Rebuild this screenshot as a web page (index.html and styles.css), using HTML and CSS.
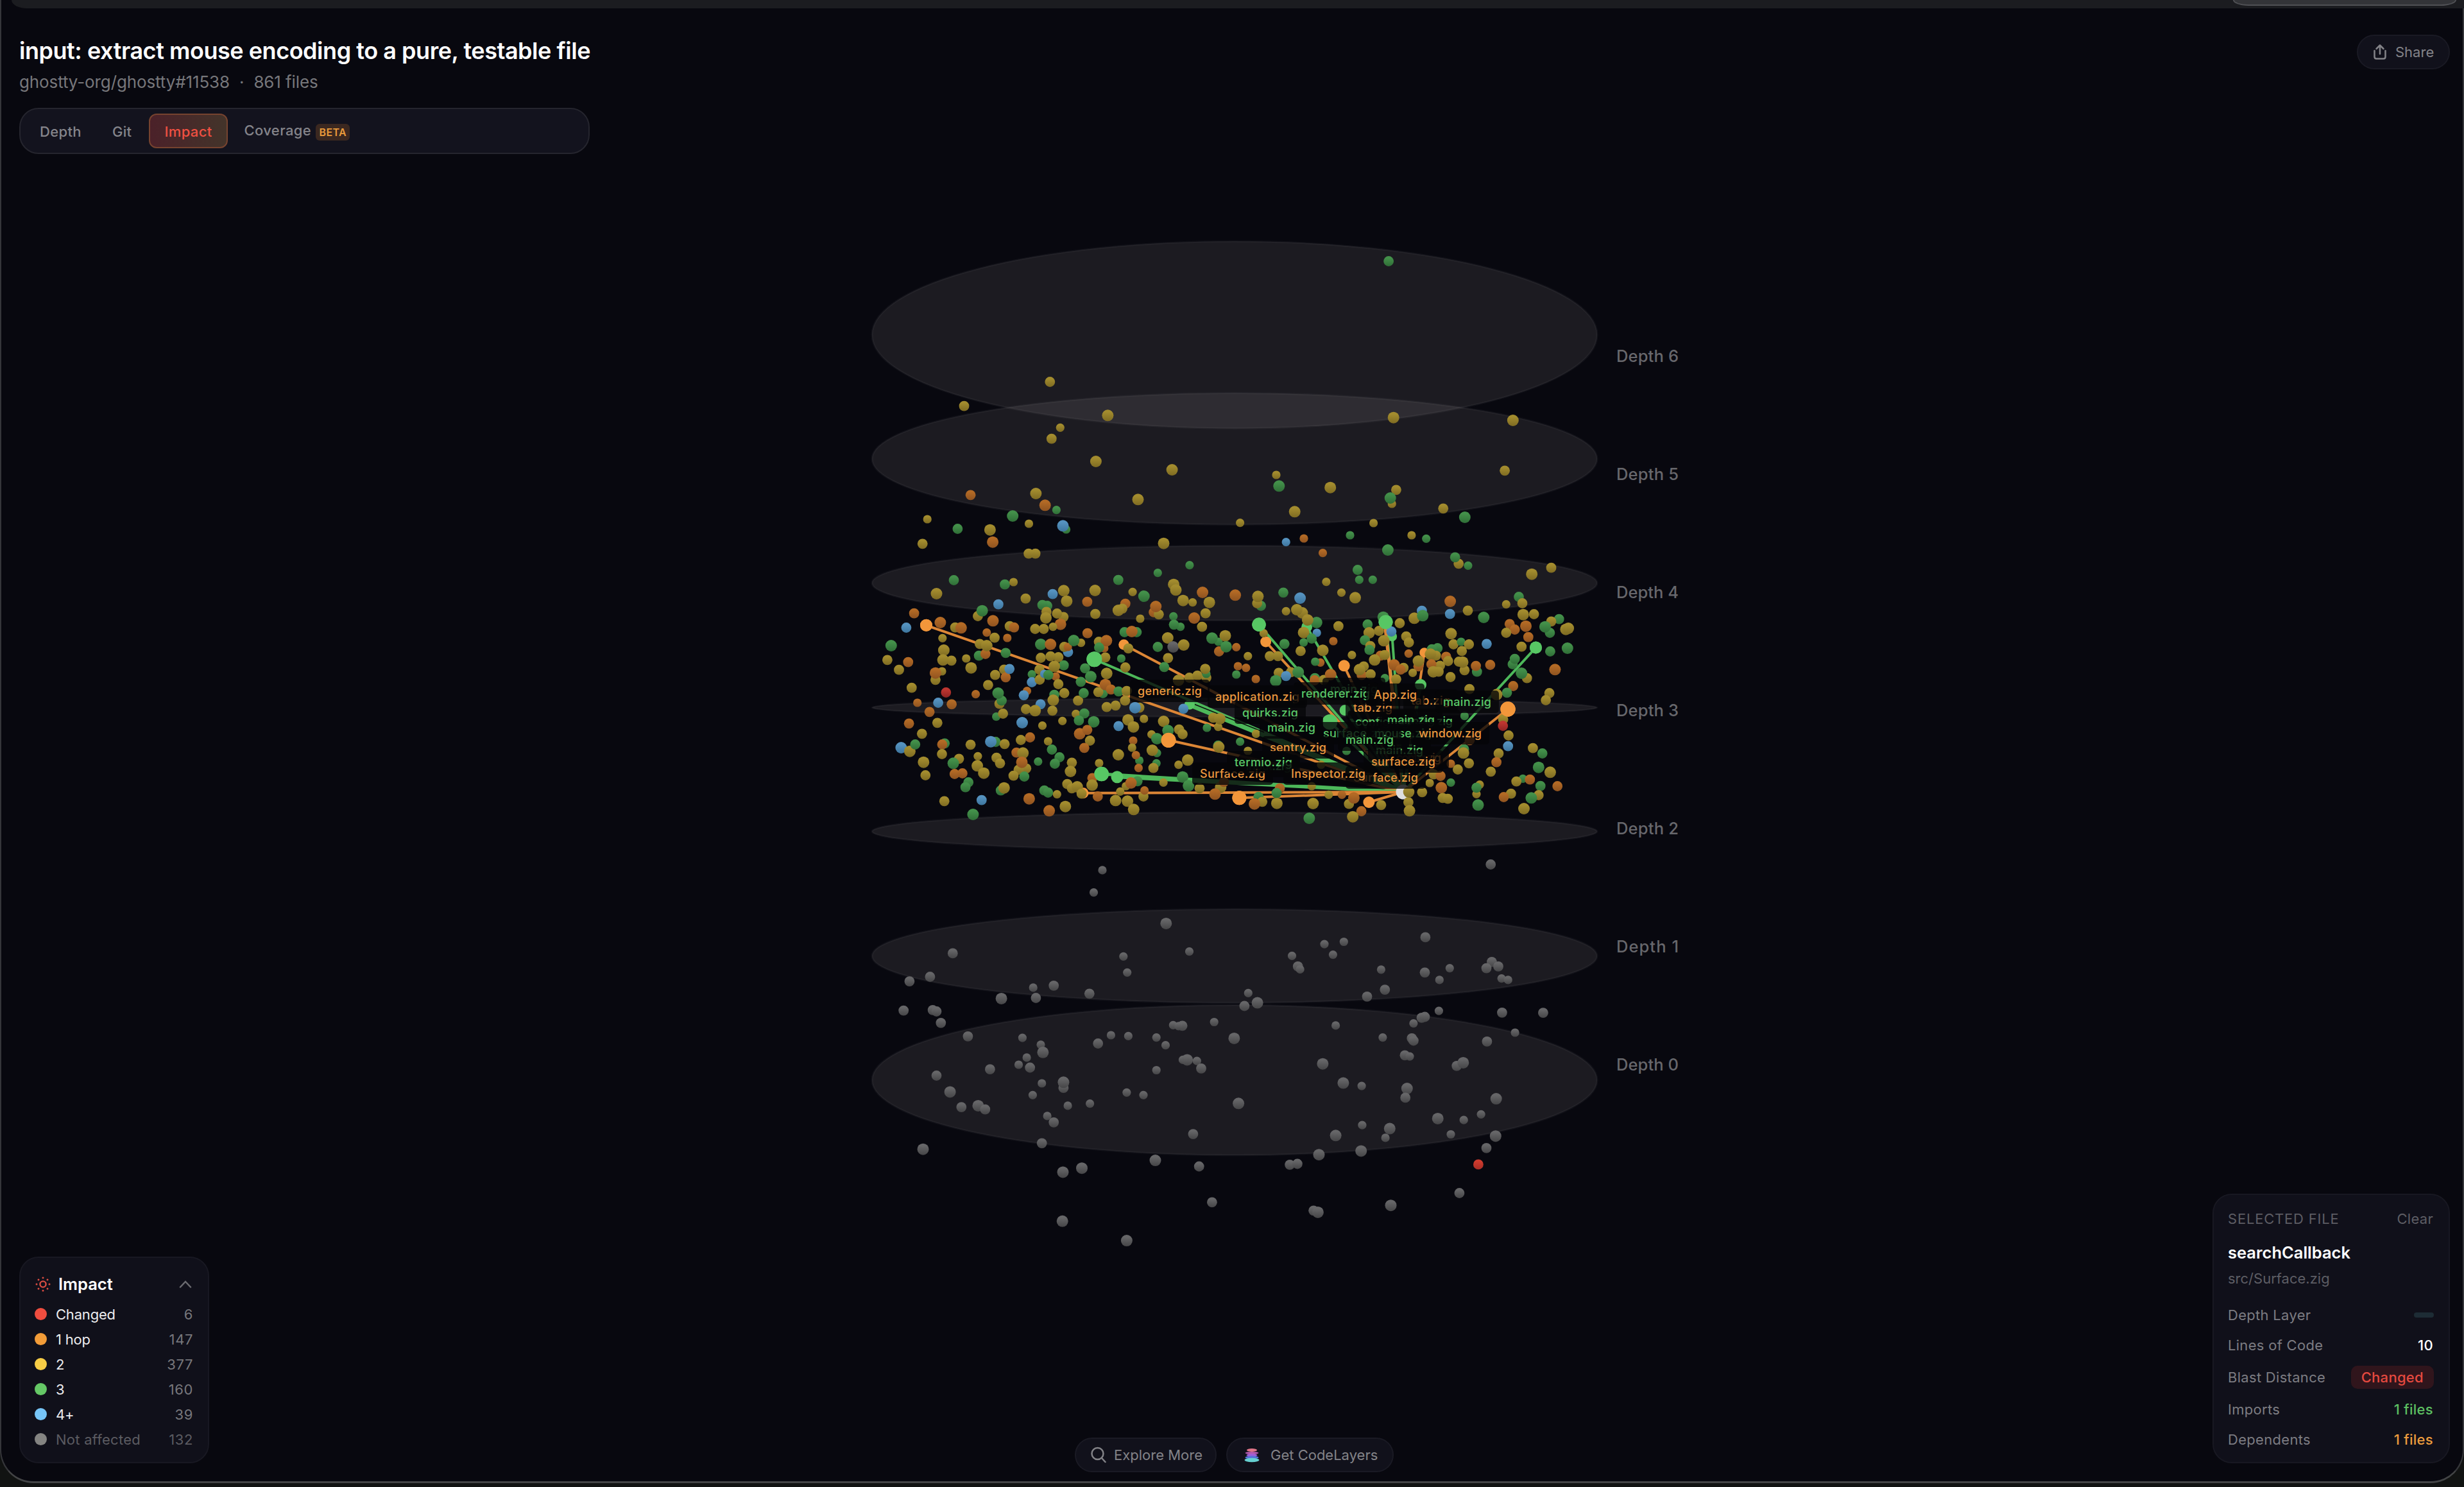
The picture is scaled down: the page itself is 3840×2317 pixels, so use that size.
FILE: index.html
```html
<!DOCTYPE html>
<html lang="en">
<head>
    <meta charset="utf-8">
    <title>CodeLayers</title>
    <link rel="stylesheet" href="styles.css">
</head>
<body>
    <div class="desktop">
        <div class="topbar"><div class="topbar-pill"></div></div>
        <div class="window">
            <svg class="scene" id="scene" width="3840" height="2317" viewBox="0 0 3840 2317"></svg>
            <header class="header">
                <div class="heading">
                    <h1>input: extract mouse encoding to a pure, testable file</h1>
                    <p class="repo">ghostty-org/ghostty#11538<span class="sep">·</span>861 files</p>
                    <nav class="tabs">
                        <button class="tab">Depth</button>
                        <button class="tab">Git</button>
                        <button class="tab active">Impact</button>
                        <button class="tab">Coverage <span class="beta">BETA</span></button>
                    </nav>
                </div>
                <button class="pill share">
                    <svg width="22" height="26" viewBox="0 0 22 26"><path d="M2.500 11v9.500q0 3 3 3h11q3 0 3-3V11M11 16V3M5.500 8 11 2.500 16.500 8"/></svg>
                    <span>Share</span>
                </button>
            </header>
            <footer class="footer">
                <section class="panel legend">
                    <div class="legend-head">
                        <svg class="burst" width="24" height="24" viewBox="0 0 24 24"><circle class="core" cx="12" cy="12" r="4.600"/><circle cx="12" cy="2" r="1.500"/><circle cx="12" cy="22" r="1.500"/><circle cx="2" cy="12" r="1.500"/><circle cx="22" cy="12" r="1.500"/><circle cx="5" cy="5" r="1.500"/><circle cx="19" cy="5" r="1.500"/><circle cx="5" cy="19" r="1.500"/><circle cx="19" cy="19" r="1.500"/></svg>
                        <h2>Impact</h2>
                        <svg class="chevron" width="20" height="12" viewBox="0 0 20 12"><path d="M2 10.500 10 2l8 8.500"/></svg>
                    </div>
                    <ul>
                        <li><i class="dot red"></i><span>Changed</span><b>6</b></li>
                        <li><i class="dot orange"></i><span>1 hop</span><b>147</b></li>
                        <li><i class="dot yellow"></i><span>2</span><b>377</b></li>
                        <li><i class="dot green"></i><span>3</span><b>160</b></li>
                        <li><i class="dot blue"></i><span>4+</span><b>39</b></li>
                        <li class="off"><i class="dot gray"></i><span>Not affected</span><b>132</b></li>
                    </ul>
                </section>
                <div class="actions">
                    <button class="pill explore">
                        <svg width="24" height="26" viewBox="0 0 24 26"><circle cx="10.500" cy="11" r="9"/><path d="m17 18 5.500 6"/></svg>
                        <span>Explore More</span>
                    </button>
                    <button class="pill get">
                        <svg class="logo" width="24" height="24" viewBox="0 0 24 24">
                            <ellipse cx="12" cy="4.500" rx="8" ry="2.500" fill="#e07688"/>
                            <ellipse cx="12" cy="9" rx="10.500" ry="2" fill="#b45bb0"/>
                            <ellipse cx="12" cy="12.500" rx="8.500" ry="2.200" fill="#a05fd8"/>
                            <ellipse cx="12" cy="16" rx="10.500" ry="2.400" fill="#5673d8"/>
                            <ellipse cx="12" cy="20" rx="11.500" ry="3.300" fill="#66d0d0"/>
                        </svg>
                        <span>Get CodeLayers</span>
                    </button>
                </div>
                <section class="panel selected">
                    <div class="row head"><span class="caption">SELECTED FILE</span><span class="clear">Clear</span></div>
                    <h2>searchCallback</h2>
                    <p class="path">src/Surface.zig</p>
                    <div class="row"><span>Depth Layer</span><i class="dash"></i></div>
                    <div class="row loc"><span>Lines of Code</span><b>10</b></div>
                    <div class="row blast"><span>Blast Distance</span><b class="changed">Changed</b></div>
                    <div class="row"><span>Imports</span><b class="imports">1 files</b></div>
                    <div class="row"><span>Dependents</span><b class="dependents">1 files</b></div>
                </section>
            </footer>
        </div>
    </div>
    <script src="scene.js"></script>
</body>
</html>
```

FILE: styles.css
```css
* {
    box-sizing: border-box;
}
body {
    margin: 0;
    width: 3840px;
    height: 2317px;
    overflow: hidden;
    background: #060609;
    color: #fff;
    font-family: Inter, "Liberation Sans", sans-serif;
    font-size: 22px;
}
h1, h2, p, ul {
    margin: 0;
    padding: 0;
}
b, i {
    font-weight: 400;
    font-style: normal;
}
button {
    font: inherit;
    color: inherit;
    border: 0;
    background: none;
    padding: 0;
}
.desktop {
    height: 2317px;
    position: relative;
    background: linear-gradient(#08080f 0, #08080f 2200px, #111312 2260px);
}
.window {
    position: relative;
    display: flex;
    flex-direction: column;
    justify-content: space-between;
    height: 2311px;
    padding: 54px 20px 28px 28px;
    border: 2px solid #35363a;
    border-top: 0;
    border-bottom: 3px solid #434446;
    border-radius: 0 0 52px 52px;
    background: #08080f;
}
.topbar {
    position: absolute;
    z-index: 2;
    top: 0;
    left: 18px;
    right: 0;
    height: 13px;
    background: #1b1c20;
    border-bottom-left-radius: 24px 13px;
}
.topbar-pill {
    position: absolute;
    right: 12px;
    top: 0;
    width: 348px;
    height: 9px;
    background: #333438;
    border: 2px solid #505155;
    border-top: 0;
    border-radius: 0 0 24px 24px / 0 0 9px 9px;
}
.scene {
    position: absolute;
    left: -2px;
    top: 0;
}
.header, .footer {
    position: relative;
    display: flex;
    justify-content: space-between;
}
.heading {
    width: 889px;
}
h1 {
    font-size: 36px;
    line-height: 44px;
    font-weight: 600;
    letter-spacing: -0.46px;
    white-space: nowrap;
    padding-top: 3px;
}
.repo {
    margin-top: 10px;
    color: #77777b;
    font-size: 26px;
    line-height: 34px;
    letter-spacing: -0.12px;
}
.sep {
    margin: 0 15px;
}
.tabs {
    display: flex;
    align-items: center;
    height: 72px;
    margin-top: 23px;
    padding-left: 6px;
    border: 2px solid #25252e;
    border-radius: 30px;
    background: #13131e;
}
.tab {
    height: 54px;
    padding: 1px 22px 0;
    border: 2px solid transparent;
    border-radius: 12px;
    color: #85858b;
    font-weight: 450;
    letter-spacing: 0.35px;
}
.tab.active {
    margin: 0 2px 0 3px;
    color: #ef5042;
    border-color: #76432f;
    background: linear-gradient(90deg, #4b2129, #43342a);
}
.beta {
    display: inline-block;
    margin-left: 1px;
    width: 53px;
    height: 26px;
    border-radius: 6px;
    background: #3b2820;
    color: #e99a3b;
    font-size: 16px;
    line-height: 26px;
    font-weight: 600;
    text-align: center;
    vertical-align: -1px;
}
.pill {
    display: flex;
    align-items: center;
    height: 54px;
    border: 2px solid #1a1a24;
    border-radius: 27px;
    background: #11111b;
    color: #838388;
}
.pill svg {
    fill: none;
    stroke: #838388;
    stroke-width: 2.500;
    stroke-linecap: round;
    stroke-linejoin: round;
}
.share {
    width: 145px;
    padding-left: 23px;
    gap: 13px;
}
.pill .logo {
    stroke: none;
    margin-left: 2px;
}
.footer {
    align-items: flex-end;
}
.panel {
    border: 2px solid #181822;
    border-radius: 30px;
    background: #10101a;
}
.legend {
    width: 296px;
    height: 322px;
    padding: 21px 23px 0 22px;
}
.legend-head {
    display: flex;
    align-items: center;
    height: 40px;
    margin-bottom: 7px;
}
.burst {
    margin-left: 1px;
    fill: #d94c42;
}
.burst .core {
    fill: none;
    stroke: #d94c42;
    stroke-width: 2.400;
}
h2 {
    font-size: 25.5px;
    line-height: 32px;
    font-weight: 600;
}
.legend h2 {
    flex: 1;
    margin-left: 12px;
}
.chevron {
    fill: none;
    stroke: #6b6b70;
    stroke-width: 2.500;
    stroke-linecap: round;
    margin-right: 2px;
}
.legend li {
    display: flex;
    align-items: center;
    height: 39px;
    color: #ececee;
}
.legend li span {
    flex: 1;
    margin-left: 14px;
    letter-spacing: -0.2px;
}
.legend li b {
    color: #77777c;
    letter-spacing: 0.6px;
}
.legend li.off span, .legend li.off b {
    color: #5b5b61;
}
.legend li.off span {
    letter-spacing: 0.25px;
}
.dot {
    width: 19px;
    height: 19px;
    border-radius: 50%;
}
.red { background: #ef4d3f; }
.orange { background: #f29c38; }
.yellow { background: #f7cd46; }
.green { background: #65c866; }
.blue { background: #77c5f7; }
.gray { background: #848482; }
.actions {
    position: absolute;
    left: 1645px;
    bottom: -14px;
    display: flex;
    gap: 15px;
}
.explore {
    width: 221px;
    padding-left: 23px;
    gap: 12px;
}
.get {
    width: 261px;
    padding-left: 24px;
    gap: 17px;
}
.selected {
    width: 370px;
    height: 420px;
    padding: 17px 24px 0 22px;
}
.row {
    display: flex;
    justify-content: space-between;
    align-items: center;
    height: 47px;
    color: #7c7c82;
    letter-spacing: 0.3px;
}
.row.head {
    height: 40px;
    color: #5d5d64;
}
.caption {
    letter-spacing: 0.8px;
}
.selected h2 {
    margin-top: 17px;
}
.path {
    margin: 9px 0 18px;
    line-height: 30px;
    color: #5d5d64;
}
.row b {
    color: #fff;
    font-weight: 500;
}
.row.blast {
    height: 53px;
}
.dash {
    width: 31px;
    height: 8px;
    border-radius: 4px;
    background: #1d2c35;
    margin-right: -1px;
}
.row .changed {
    height: 36px;
    padding: 0 16px;
    margin-right: -1px;
    border-radius: 10px;
    background: #30151c;
    color: #e5493f;
    line-height: 36px;
}
.row .imports { color: #5cbf61; }
.row .dependents { color: #eb9b3d; }
```

FILE: scene.js
```js
var scene = document.getElementById("scene");
var NS = "http://www.w3.org/2000/svg";

function add(name, attrs, text) {
    var el = document.createElementNS(NS, name);
    for (var key in attrs) el.setAttribute(key, attrs[key]);
    if (text) el.textContent = text;
    scene.appendChild(el);
    return el;
}

// top / bottom shade of every node colour
var shades = {
    y: ["#a38c2e", "#7e6b22"],
    o: ["#b36a25", "#8f5320"],
    g: ["#43904a", "#2f6e37"],
    b: ["#5592bf", "#3d759e"],
    x: ["#666668", "#454547"],
    r: ["#bf3530", "#8f2423"],
    R: ["#cf3b2e", "#a82d25"]
};
var defs = add("defs", {});
for (var id in shades) {
    defs.innerHTML += '<linearGradient id="n-' + id + '" x1="0" y1="0" x2="0" y2="1">' +
        '<stop offset="0.2" stop-color="' + shades[id][0] + '"/><stop offset="1" stop-color="' + shades[id][1] + '"/></linearGradient>';
}

// depth layers: label, centre y, vertical radius, label y
var layers = [
    ["Depth 0", 1683, 117, 1658.6],
    ["Depth 1", 1489.6, 73, 1475],
    ["Depth 2", 1295.5, 30, 1290.8],
    ["Depth 3", 1102.5, 14.5, 1106.7],
    ["Depth 4", 908.5, 58.3, 922.7],
    ["Depth 5", 715, 102.5, 738.7],
    ["Depth 6", 521.7, 145.7, 555]
];
layers.forEach(function (l) {
    add("ellipse", {cx: 1924, cy: l[1], rx: 565, ry: l[2], fill: "#fff6ee", "fill-opacity": 0.083, stroke: "#fff", "stroke-opacity": 0.045, "stroke-width": 3});
});

// nodes per sector: x,y + colour + optional size (s / l)
var sectors = [
    {x: 1340, y: 350, kx: 1.1879, ky: 3, nodes:
        "979,171g 352,735y 193,848y 459,892yl 371,949ys 355,1001y 988,902yl 1209,915yl 437,1107yl 578,1146yl 771,1170ys 776,1222gl 871,1229yl 1194,1150y " +
        "993,1240y 985,1305ys 982,1278gl 205,1264o 326,1257yl 343,1312ol 364,1334gs 515,1285yl 805,1342yl 704,1394ys 1080,1327y 1120,1368gl 951,1395ys " +
        "283,1362gl 125,1377ys 181,1422g 241,1427yl 313,1398ys 382,1425gs 376,1408bl"},
    {x: 1340, y: 830, kx: 2.3758, ky: 3, nodes:
        "232,52y 492,44ol 1125,50yl 625,98y 650,98y 1221,152gs 1103,188gs 348,222g 537,242g 569,231ys 957,221g 284,285yl 614,308y 714,287b 513,335b 755,271yl 766,320yl 871,270yl 842,323o " +
        "1010,277ys 1052,297gl 1162,242yl 1170,268yl 1269,279ol 1232,326ys 1197,317yl 1294,326yl 1390,292ol 1485,342g 1471,330y 1474,298yl 694,342g 676,338g 691,370y 754,394y 730,378y 689,398yl " +
        "743,428ol 649,450y 715,440ys 681,450y 872,380y 983,332o 972,355y 957,363yl 1088,372o 1107,382y 1096,345ol 1038,402ys 1280,377y 1238,399ol 1161,391gs 1187,440gs 1163,430g 1267,440y " +
        "201,377o 298,420ol 172,444b 353,443y 375,445ol 437,390y 453,365gl 493,412ol 555,437y 571,443o 470,467os 499,491y 546,492os 306,493ys 444,520y 441,575g 465,567o 470,528yl 540,562g " +
        "116,528gl 311,549yl 339,598y 308,595yl 394,588ys 412,632yl 102,595y 179,605o 145,641y 304,648ys 280,688y 280,656ol 192,725y 319,747r 429,755os 213,795os 290,795b 340,802o 258,838o 182,892o " +
        "287,889y 230,940y 475,712y 501,665y 534,640y 540,676o 554,637b 637,662gs 665,640y 637,699b 666,687y 683,660bs 725,672os 698,665g 735,708y 757,750y 755,620g 735,582y 706,578y 720,625yl 670,585y " +
        "771,558b 757,534y 770,534os 819,515ys 792,504gl 843,470o 670,522gl 706,522ol 885,510y 905,540os 913,505ol 886,537g 909,583y 968,588gs 983,630y 834,634g 818,697g 855,673gl 914,658yl " +
        "980,465g 1025,465g 1007,462ol 994,541y 1140,492yl 1103,534g 1160,534xl 1199,525yl 1141,586y 1127,628g 1279,637y 1328,510gs 1304,493gl 1330,555o 1353,482yl 1356,533gl 1394,535os 1437,577ys " +
        "1400,624os 1430,632os 1394,663gs 1466,684os 1518,577y 1548,577y 1495,470ys 1551,655y 1540,692gl 1180,690yl 1220,678y 1250,668y 1283,678y 1283,660gs 1279,637y " +
        "517,800y 525,785g 512,750gl 505,860gs 530,846y 619,740os 607,760b 720,758g 716,783yl 713,832y 615,825y 669,802b 649,832yl 601,888bl 676,902ys 750,880ys 808,785y 829,750g 900,750g 883,745y " +
        "909,710ol 930,733o 958,742g 988,740y 982,785y 947,808y 914,815y 800,847ys 831,845g 811,878g 866,884gl 814,940ol 842,922o 852,972y 831,1006o 697,975ys 711,1014g 739,1050g 722,1080g 630,957o 596,969y " +
        "1035,818y 1019,818bl 993,875yl 1013,908yl 1052,870ys 1125,882yl 958,904b 1141,925gl 1182,920y 1195,942y 1080,943ys 1100,963gl 1012,972os 1008,1005ys 1100,1030gs 1083,1017yl 1035,1065gs 1022,1040os " +
        "1032,1100os 1098,1078gs 1087,1100y 957,1038yl 1285,912gs 1327,908ys 1308,865y 1333,870yl 1198,823b 1467,940ys 1408,977gs 1327,995g 1329,1002yl 1437,1020ys 1214,1063yl 1180,1085ys 1124,1168ys 886,1077ys " +
        "153,1005bl 185,1022yl 205,990g 314,985g 305,990o 304,1035y 410,991y 503,978g 485,977bl 536,988y 437,1045ys 367,1057y 346,1078gl 236,1073yl 243,1134y 435,1090yl 459,1124yl 506,1052y 519,1078y " +
        "580,1028o 604,1030yl 616,1102y 588,1108y 600,1073ol 609,1140g 569,1136y 660,1070gs 785,1075y 780,1116yl 351,1128o 380,1125o 402,1167g 391,1190g 313,1255y 451,1250b 419,1317gl 522,1205g 534,1193yl " +
        "627,1244ol 683,1205g 697,1215g 730,1223ys 701,1300ol 761,1280yl 768,1175y 785,1195y 805,1188yl 821,1220y 861,1147o 860,1180yl 881,1233o 985,1185ys 1028,1162g 1004,1170ol 964,1210ys 1050,1233y " +
        "1054,1205os 947,1252yl 991,1255yl 1014,1294yl 1195,1142gl 1217,1183gl 1258,1195y 1336,1190yl 1348,1165o 1315,1222ol 1476,1235g 1490,1258y 1461,1268ol 1544,1265yl 1555,1195o 1543,1217g"},
    {x: 2000, y: 830, kx: 2.3758, ky: 3, nodes:
        "10,44bs 76,27os 247,12gs 475,12ys 529,28gs 387,81gl 146,95os 275,174g 281,220gs 331,220gs 159,230ys 215,280ys 266,304yl 649,145y 636,115g 684,154gs 992,164y 920,194yl 0,280g 62,306bl " +
        "10,367ys 70,375yl 50,360yl 123,420gl 90,408yl 204,437y 124,468bs 75,467yl 64,553y 146,550yl 105,495g 75,513gs 4,520g 137,607os 118,603gs 185,507os 254,572ys 312,429g 318,468yl 354,459y " +
        "302,503g 322,530y 319,548g 360,575o 338,595yl 375,572y 372,505yl 370,395gl 431,423y 455,485y 465,513y 485,400yl 513,365b 516,388gl 464,565os 618,321ol 617,380b 683,364y 742,396gl " +
        "621,472yl 630,522y 658,510gs 687,522y 661,553y 753,520b 825,335ys 872,300g 885,330y 888,383yl 928,381y 838,427o 857,453o 825,468y 898,437ol 907,488o 1021,404g 992,415y 987,468g 969,440gl " +
        "1046,452yl 1055,447yl 882,533y 988,555g 1052,540gl 849,615g 857,590g 902,680y 882,657gl 1006,640ol 766,618o 717,650g 713,623o 689,731y 851,717o 828,748g 790,757yl 985,750y 972,783y " +
        "671,643y 650,603y 664,605yl 603,580o 610,600y 571,540g 550,545g 565,575y 545,568yl 580,622y 548,615o 575,650y 555,650yl 500,625o 500,600yl 619,675y 410,618ol 445,632y 434,640o 479,655ys " +
        "290,665o 298,625y 282,640yl 323,662y 117,680g 116,690o 150,688y 175,663ol 28,652y 55,652gl 10,670b 376,680gs 418,685y 400,462b " +
        "814,873y 813,903r 834,948y 832,998b 924,1007y 959,1032g 797,1032y 789,1073o 768,1117y 988,1120yl 945,1097gl 669,1012g 667,1030yl 687,1078y 620,1080os 646,1107y 557,1130y 582,1137o 542,1170ys " +
        "620,1168gs 727,1178ys 715,1222ys 715,1192g 721,1273gl 887,1150gs 863,1163y 913,1154o 952,1184g 1015,1185o 945,1227y 918,1240gl 843,1220y 816,1236o 891,1290yl 514,1213y 585,1192ol 590,1240y " +
        "609,1244y 463,1260y 467,1300yl 217,1225os 168,1225ys 105,1185ys 110,1266yl 243,1268y 261,1240ol 362,1273y 289,1302o 257,1328yl 96,1335gl 234,1020gs 671,857gs 140,1085ys 690,970o"},
    {x: 1340, y: 1280, kx: 1.1879, ky: 2.24, nodes:
        "449,170xs 433,248xs 1168,150x 567,356xl 172,460x 488,471xs 495,527xs 610,454xs 130,542x 92,558x 860,428xs 896,420xs 876,465xs 800,469xs 811,506x 815,516xs 1047,404x 965,517xs 1046,527x 1092,512xs " +
        "1073,553xs 1170,490x 1182,506x 1160,512x 1188,548xs 1200,553xs 972,587x 939,611x 359,573x 321,580xs 326,616x 262,618xl 425,601x 719,599xs 736,633xl 712,644x 81,660x 135,658x 142,663x 150,703x " +
        "200,750x 301,755xs 335,779xs 339,806xl 309,824xs 294,849xs 315,859x 241,865x 142,887x 167,944xl 188,997x 219,992xl 232,1005x 337,914xs 377,930x 377,910xl 320,955xs 385,992xs 426,985xs 347,1028xs " +
        "359,1050x 337,1123x 117,1144xl 465,746xs 497,749xs 441,775x 549,754xs 566,781xs 580,711xs 597,713x 590,714xs 656,700xs 693,757xl 598,832xs 606,832xl 624,836xs 632,862x 549,868xs 494,946xs 525,955xs " +
        "701,984xl 617,1091x 881,712xs 968,754xs 1072,661xs 1040,685x 1046,682x 1025,705xs 1022,757x 1025,765x 1189,667x 1265,668x 1213,737xs 1161,768x 1009,816x 1018,820xs 857,846xl 895,913xl 929,923xs " +
        "1105,853x 1117,842xl 1013,932xl 1010,964x 1178,968xl 1150,1022xs 1118,1042xs 1070,1037xl 930,1060xs 981,1072xl 973,1104xs 1094,1092xs 881,1096xl 1177,1098xl 1160,1140x 928,1150xl 850,1163xl " +
        "1145,1197R 1110,1297x 983,1340xl 840,1358x 848,1364xl 796,1198x 810,1195x 652,1329x 547,1183xl 628,1204x 411,1210xl 376,1224xl 375,1395xl 494,1463xl"}
];

// edges of the selected file: x, y, colour, node radius, line width
var hub = [2187, 1234];
var links = [
    [1443.5, 974.3, "o", 9.5, 4], [1705.4, 1027.3, "g", 12, 4], [1751.5, 1004.5, "o", 8.3, 4], [1854, 1097.7, "g", 8, 8],
    [1821, 1153.3, "o", 11.5, 4], [1716.7, 1206, "g", 11.3, 5], [1741, 1210.7, "g", 9.5, 5], [1931.4, 1243.3, "o", 11, 4],
    [1688, 1235.7, "o", 8.5, 4], [1962, 973.3, "g", 10.7, 4], [1972.6, 1000, "o", 8.5, 4], [2159.5, 969.3, "g", 11, 4],
    [2158.5, 975, "o", 6, 5], [2169.6, 991.7, "g", 7.5, 4], [2393.5, 1009, "g", 9.5, 4], [2094.7, 1037.3, "o", 9, 4],
    [2219.7, 1016.7, "o", 7.5, 4], [2350, 1105, "o", 11.7, 4], [2036.6, 976.7, "g", 8.5, 4], [2133.4, 1250, "o", 9, 4],
    [2072.4, 1125, "g", 12, 4], [2096, 1106.7, "g", 8.5, 4], [2214, 1067, "g", 9, 4]
];
var bright = {o: "#f3963a", g: "#57c764"};
links.forEach(function (l) {
    add("line", {x1: l[0], y1: l[1], x2: hub[0], y2: hub[1], stroke: l[2] == "o" ? "#dc8636" : "#4db85a", "stroke-width": l[4]});
});
add("line", {x1: 1858, y1: 1096, x2: 1970, y2: 1141, stroke: "#0a130f", "stroke-width": 1.5});
add("circle", {cx: hub[0], cy: hub[1], r: 11.5, fill: "#dedede"});
links.forEach(function (l) {
    if (l[3] != 6) add("circle", {cx: l[0], cy: l[1], r: l[3], fill: bright[l[2]]});
});

var radius = {s: 6.6, l: 9};
sectors.forEach(function (s) {
    s.nodes.split(" ").forEach(function (n) {
        var m = n.match(/^(-?\d+),(-?\d+)([yogbxrR])([sl]?)$/);
        add("circle", {
            cx: (s.x + m[1] / s.kx).toFixed(1),
            cy: (s.y + m[2] / s.ky).toFixed(1),
            r: radius[m[4]] || 7.9,
            fill: "url(#n-" + m[3] + ")"
        });
    });
});
// these sit in front of the small nodes
[11, 1, 14, 17, 9, 5, 4, 7, 0].forEach(function (i) {
    add("circle", {cx: links[i][0], cy: links[i][1], r: links[i][3], fill: bright[links[i][2]]});
});
add("circle", {cx: 2195.5, cy: 1234, r: 8.8, fill: "url(#n-y)"});

// file labels, back to front: text, left, centre y, width, colour
var labels = [
    ["main.zig", 2073, 1074, 74, "g"], ["input.zig", 1942, 1194, 70, "g"], ["config.zig", 2176, 1181, 70, "o"],
    ["Surface.zig", 1870, 1206, 102, "o"], ["config.zig", 2112, 1125, 84, "g"], ["config.zig", 2180, 1124, 84, "g"],
    ["tab.zig", 2199, 1092, 61, "o"], ["surface.zig", 2062, 1143, 101, "g"], ["tab.zig", 2109, 1103, 61, "o"],
    ["main.zig", 2162, 1122, 74, "g"], ["mouse.zig", 2142, 1143, 89, "g"], ["application.zig", 1894, 1086, 131, "o"],
    ["quirks.zig", 1936, 1111, 87, "g"], ["generic.zig", 1773, 1077, 100, "o"], ["renderer.zig", 2028, 1081, 107, "g"],
    ["App.zig", 2141, 1083, 67, "o"], ["main.zig", 1975, 1134, 75, "g"], ["sentry.zig", 1979, 1165, 88, "o"],
    ["termio.zig", 1924, 1188, 90, "g"], ["main.zig", 2249, 1094, 75, "g"], ["main.zig", 2144, 1169, 74, "g"],
    ["main.zig", 2097, 1153, 75, "g"], ["Surface.zig", 2109, 1212, 101, "o"], ["Inspector.zig", 2012, 1206, 116, "o"],
    ["surface.zig", 2137, 1187, 100, "o"], ["window.zig", 2211, 1143, 98, "o"]
];
labels.forEach(function (l) {
    add("rect", {x: l[1] - 12, y: l[2] - 18, width: l[3] + 24, height: 35, rx: 5, fill: "#050508", "fill-opacity": 0.78});
    add("text", {x: l[1], y: l[2] + 6, textLength: l[3], "font-size": 18, "font-weight": 550, fill: l[4] == "o" ? "#eb983f" : "#5ac968"}, l[0]);
});

layers.forEach(function (l) {
    add("text", {x: 2519, y: l[3] + 9, textLength: 97, "font-size": 25.5, "font-weight": 500, fill: "#67676c"}, l[0]);
});
```
